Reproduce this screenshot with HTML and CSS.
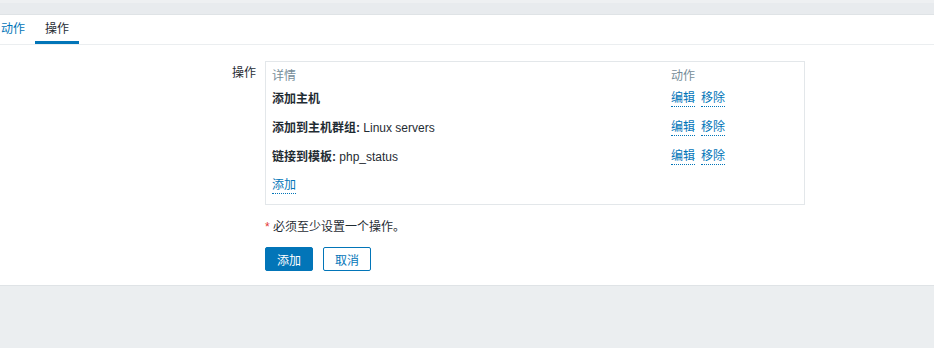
FILE: index.html
```html
<!DOCTYPE html>
<html lang="zh">
<head>
<meta charset="utf-8">
<title>操作</title>
<link rel="stylesheet" href="styles.css">
</head>
<body>
<div class="topbar"></div>
<div class="main">
  <ul class="tabs">
    <li class="tab"><a href="#" class="tab-link">动作</a></li>
    <li class="tab active"><span>操作</span></li>
  </ul>
  <div class="form">
    <div class="label">操作</div>
    <div class="box">
      <div class="row head">
        <div>详情</div>
        <div>动作</div>
      </div>
      <div class="row">
        <div><b>添加主机</b></div>
        <div class="acts"><a href="#" class="link">编辑</a><a href="#" class="link">移除</a></div>
      </div>
      <div class="row">
        <div><b>添加到主机群组:</b> Linux servers</div>
        <div class="acts"><a href="#" class="link">编辑</a><a href="#" class="link">移除</a></div>
      </div>
      <div class="row">
        <div><b>链接到模板:</b> php_status</div>
        <div class="acts"><a href="#" class="link">编辑</a><a href="#" class="link">移除</a></div>
      </div>
      <div class="row">
        <div><a href="#" class="link">添加</a></div>
        <div></div>
      </div>
    </div>
    <div class="req"><span class="star">*</span> 必须至少设置一个操作。</div>
    <div class="buttons">
      <button class="btn primary">添加</button>
      <button class="btn secondary">取消</button>
    </div>
  </div>
</div>
</body>
</html>
```
FILE: styles.css
```css
html, body {
  margin: 0;
  padding: 0;
}
body {
  background: #ebeef0;
  font-family: Arial, "Liberation Sans", "Noto Sans CJK SC", sans-serif;
  font-size: 12px;
  color: #1f2c33;
  height: 348px;
  overflow: hidden;
}
.topbar {
  height: 11px;
  border-top: 3px solid #eef0f2;
  background: #e8ebee;
  border-bottom: 1px solid #dfe3e6;
}
.main {
  background: #fff;
  border-bottom: 1px solid #dfe3e6;
  padding-bottom: 14px;
}
.tabs {
  list-style: none;
  margin: 0 0 0 -9px;
  padding: 0;
  display: flex;
  height: 29px;
  border-bottom: 1px solid #ebeef0;
}
.tab {
  padding: 0 10px;
  line-height: 28px;
  border-bottom: 3px solid transparent;
}
.tab.active {
  border-bottom-color: #0275b8;
}
.tab-link {
  color: #0275b8;
  text-decoration: none;
}
.form {
  margin-top: 16px;
  display: grid;
  grid-template-columns: 256px 540px;
  column-gap: 9px;
}
.label {
  text-align: right;
  padding-top: 4px;
  line-height: 16px;
}
.box {
  grid-column: 2;
  box-sizing: border-box;
  border: 1px solid #e3e7ea;
  padding: 4px 6px 5px 6px;
}
.row {
  display: grid;
  grid-template-columns: 399px auto;
  height: 29px;
  align-items: center;
}
.row.head {
  height: 17px;
  color: #768d99;
}
.acts {
  display: flex;
  gap: 6px;
}
.link {
  display: inline-block;
  color: #0275b8;
  text-decoration: none;
  line-height: 15px;
  padding-top: 2px;
  border-bottom: 1px dotted #0275b8;
}
b {
  font-weight: bold;
}
.req {
  grid-column: 2;
  margin-top: 14px;
  line-height: 16px;
}
.star {
  color: #e33734;
}
.buttons {
  grid-column: 2;
  margin-top: 12px;
  display: flex;
  gap: 10px;
}
.btn {
  box-sizing: border-box;
  width: 48px;
  height: 24px;
  border-radius: 2px;
  font-family: inherit;
  font-size: 12px;
  padding: 0;
  cursor: pointer;
}
.btn.primary {
  background: #0275b8;
  border: 1px solid #0275b8;
  color: #fff;
}
.btn.secondary {
  background: #fff;
  border: 1px solid #0275b8;
  color: #0275b8;
}
```
